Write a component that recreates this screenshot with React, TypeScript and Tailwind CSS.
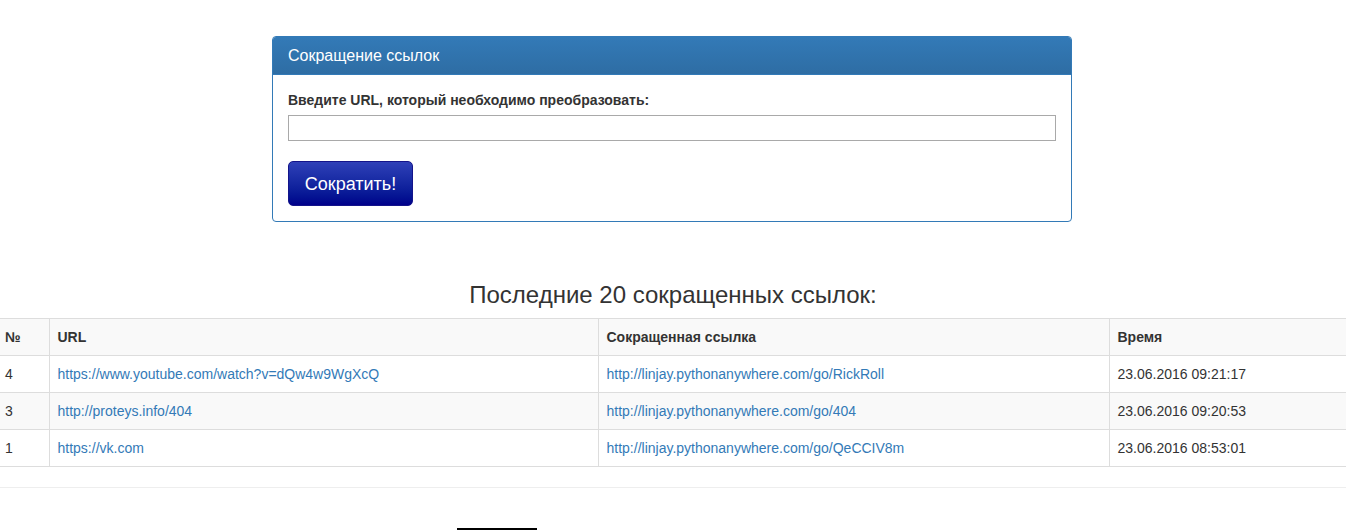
const rows = [
  {
    id: 4,
    url: "https://www.youtube.com/watch?v=dQw4w9WgXcQ",
    short: "http://linjay.pythonanywhere.com/go/RickRoll",
    time: "23.06.2016 09:21:17",
  },
  {
    id: 3,
    url: "http://proteys.info/404",
    short: "http://linjay.pythonanywhere.com/go/404",
    time: "23.06.2016 09:20:53",
  },
  {
    id: 1,
    url: "https://vk.com",
    short: "http://linjay.pythonanywhere.com/go/QeCCIV8m",
    time: "23.06.2016 08:53:01",
  },
];

function App() {
  return (
    <div
      className="min-h-screen bg-white text-[14px] leading-[20px] text-[#333]"
      style={{ fontFamily: '"Liberation Sans", Arial, sans-serif' }}
    >
      {/* Form panel */}
      <div className="pt-[36px]">
        <div className="mx-auto w-[800px] -translate-x-px rounded-[4px] border border-[#337ab7]">
          <div className="rounded-t-[3px] border-b border-[#337ab7] bg-gradient-to-b from-[#337ab7] to-[#2e6da4] px-[15px] py-[10px] text-[16px] leading-[17px] text-white">
            Сокращение ссылок
          </div>
          <div className="p-[15px]">
            <label className="mb-[5px] block font-bold">
              Введите URL, который необходимо преобразовать:
            </label>
            <input
              type="text"
              className="block h-[26px] w-full border border-[#a9a9a9] px-1 outline-none"
            />
            <button className="mt-[20px] h-[45px] w-[125px] rounded-[5px] border border-[#14148a] bg-gradient-to-b from-[#2f40b8] to-[#00008a] text-[18px] text-white">
              Сократить!
            </button>
          </div>
        </div>
      </div>

      {/* Recent links */}
      <h3 className="mt-[60px] mb-[10px] text-center text-[24px] leading-[26px]">
        Последние 20 сокращенных ссылок:
      </h3>
      <table className="w-full table-fixed border-collapse">
        <colgroup>
          <col className="w-[49px]" />
          <col className="w-[549px]" />
          <col className="w-[511px]" />
          <col />
        </colgroup>
        <thead>
          <tr className="bg-[#f9f9f9]">
            <th className="border-y border-r border-[#ddd] py-[8px] pl-[5px] text-left font-bold">№</th>
            <th className="border border-[#ddd] p-[8px] text-left font-bold">URL</th>
            <th className="border border-[#ddd] p-[8px] text-left font-bold">Сокращенная ссылка</th>
            <th className="border-y border-l border-[#ddd] p-[8px] text-left font-bold">Время</th>
          </tr>
        </thead>
        <tbody>
          {rows.map((r, i) => (
            <tr key={r.id} className={i % 2 === 1 ? "bg-[#f9f9f9]" : "bg-white"}>
              <td className="border-y border-r border-[#ddd] py-[8px] pl-[5px]">{r.id}</td>
              <td className="border border-[#ddd] p-[8px]">
                <a href="#" className="text-[#337ab7]">{r.url}</a>
              </td>
              <td className="border border-[#ddd] p-[8px]">
                <a href="#" className="text-[#337ab7]">{r.short}</a>
              </td>
              <td className="border-y border-l border-[#ddd] p-[8px]">{r.time}</td>
            </tr>
          ))}
        </tbody>
      </table>
      <hr className="mt-[20px] border-t border-[#eee]" />

      <div className="ml-[457px] mt-[40px] h-[2px] w-[80px] bg-black" />
    </div>
  );
}

export default App;
